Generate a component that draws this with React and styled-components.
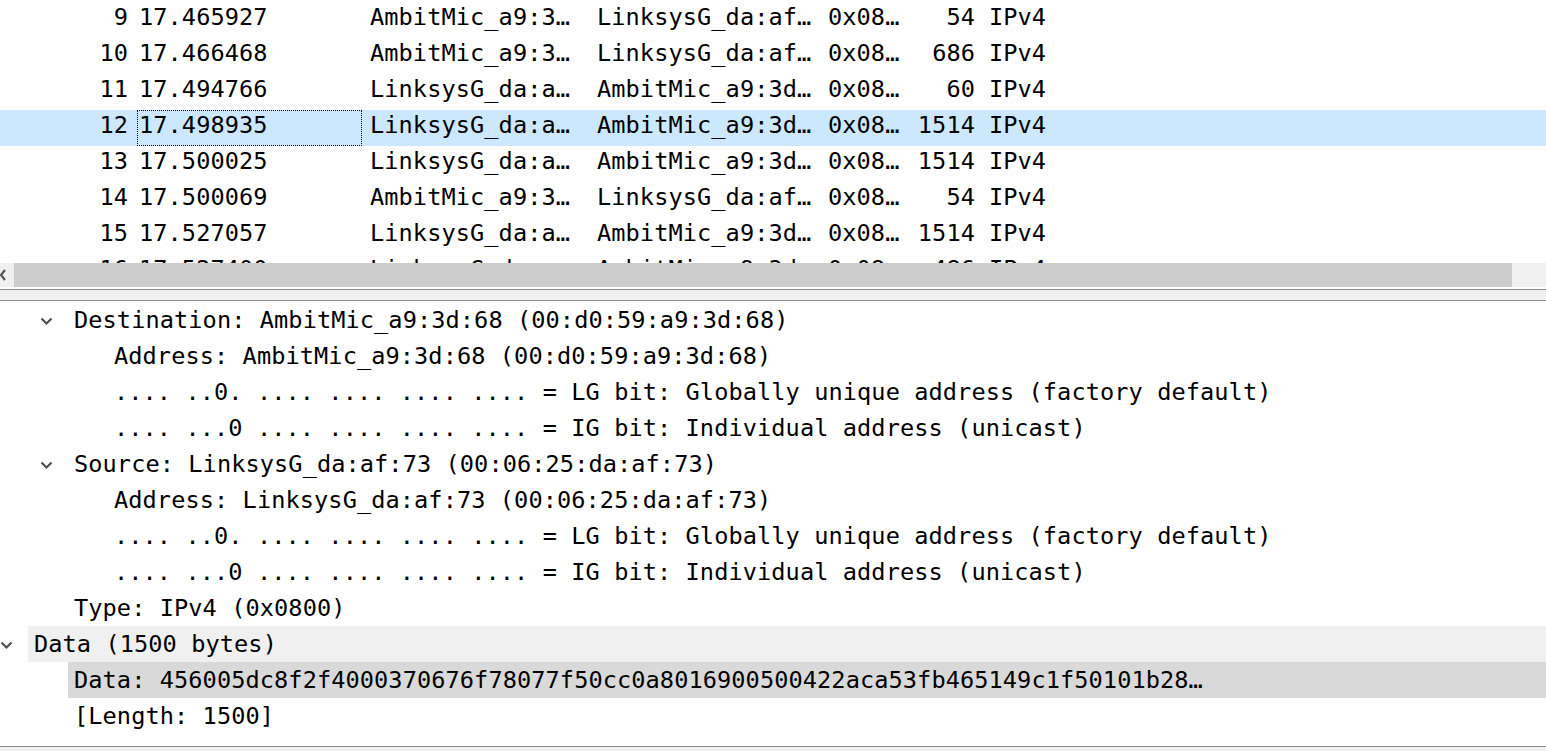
import React from "react";
import styled, { createGlobalStyle } from "styled-components";

const Global = createGlobalStyle`
  html, body { margin: 0; padding: 0; background: #ffffff; }
  body { font-family: "DejaVu Sans Mono", "Liberation Mono", monospace; color: #000; }
`;

const MONO = `"DejaVu Sans Mono", "Liberation Mono", monospace`;

const Frame = styled.div`
  width: 1546px;
  height: 751px;
  display: flex;
  flex-direction: column;
  overflow: hidden;
  background: #fff;
  font-family: ${MONO};
  font-size: 23.6px;
  letter-spacing: 0.085px;
`;

const PacketList = styled.div`
  height: 263px;
  flex: none;
  overflow: hidden;
  padding-top: 2px;
  box-sizing: border-box;
`;

const PacketRow = styled.div`
  display: grid;
  grid-template-columns: 137px 225px 232px 231px 80px 81px 1fr;
  height: 36px;
  line-height: 31px;
  background: ${(p) => (p.$selected ? "#cce8ff" : "transparent")};
  white-space: pre;
`;

const Cell = styled.div`
  overflow: hidden;
  text-align: ${(p) => (p.$right ? "right" : "left")};
  padding-left: ${(p) => p.$pl || 0}px;
  padding-right: ${(p) => p.$pr || 0}px;
  outline: ${(p) => (p.$focus ? "1px dotted #000" : "none")};
  outline-offset: -1px;
`;

const HScroll = styled.div`
  height: 24px;
  flex: none;
  display: flex;
  margin-bottom: 2px;
`;

const ArrowButton = styled.div`
  width: 14px;
  background: #f0f0f0;
  display: flex;
  align-items: stretch;
`;

const Thumb = styled.div`
  width: 1498px;
  background: #cdcdcd;
`;

const Track = styled.div`
  flex: 1;
  background: #f0f0f0;
`;

const Splitter = styled.div`
  height: 10px;
  flex: none;
  background: #f0f0f0;
  border-top: 1px solid #8a8d95;
  border-bottom: 1px solid #8a8d95;
`;

const Tree = styled.div`
  flex: 1;
  overflow: hidden;
  padding-top: 1px;
`;

const TreeRow = styled.div`
  display: flex;
  height: 36px;
  line-height: 37px;
  padding-left: ${(p) => p.$level * 40}px;
  white-space: pre;
`;

const ChevronSlot = styled.div`
  width: 28px;
  flex: none;
  display: flex;
  align-items: center;
  padding-top: 1px;
`;

const Label = styled.div`
  flex: 1;
  padding-left: 6px;
  background: ${(p) => p.$bg || "transparent"};
  overflow: hidden;
`;

const BottomBar = styled.div`
  height: 4px;
  flex: none;
  background: #f0f0f0;
  border-top: 1px solid #8a8d95;
`;

const Chevron = () => (
  <svg width="13" height="8" viewBox="0 0 13 8">
    <polyline
      points="1.5,1.5 6.5,6.5 11.5,1.5"
      fill="none"
      stroke="#505050"
      strokeWidth="2.2"
    />
  </svg>
);

const LeftArrow = () => (
  <svg width="14" height="24" viewBox="0 0 14 24">
    <polyline points="5,7 1,12 5,17" fill="none" stroke="#555555" strokeWidth="2.2" />
  </svg>
);

const packets = [
  ["9", "17.465927", "AmbitMic_a9:3…", "LinksysG_da:af…", "0x08…", "54", "IPv4"],
  ["10", "17.466468", "AmbitMic_a9:3…", "LinksysG_da:af…", "0x08…", "686", "IPv4"],
  ["11", "17.494766", "LinksysG_da:a…", "AmbitMic_a9:3d…", "0x08…", "60", "IPv4"],
  ["12", "17.498935", "LinksysG_da:a…", "AmbitMic_a9:3d…", "0x08…", "1514", "IPv4"],
  ["13", "17.500025", "LinksysG_da:a…", "AmbitMic_a9:3d…", "0x08…", "1514", "IPv4"],
  ["14", "17.500069", "AmbitMic_a9:3…", "LinksysG_da:af…", "0x08…", "54", "IPv4"],
  ["15", "17.527057", "LinksysG_da:a…", "AmbitMic_a9:3d…", "0x08…", "1514", "IPv4"],
  ["16", "17.527400", "LinksysG_da:a…", "AmbitMic_a9:3d…", "0x08…", "486", "IPv4"],
];

const SELECTED = "12";

const details = [
  { level: 1, open: true, text: "Destination: AmbitMic_a9:3d:68 (00:d0:59:a9:3d:68)" },
  { level: 2, text: "Address: AmbitMic_a9:3d:68 (00:d0:59:a9:3d:68)" },
  { level: 2, text: ".... ..0. .... .... .... .... = LG bit: Globally unique address (factory default)" },
  { level: 2, text: ".... ...0 .... .... .... .... = IG bit: Individual address (unicast)" },
  { level: 1, open: true, text: "Source: LinksysG_da:af:73 (00:06:25:da:af:73)" },
  { level: 2, text: "Address: LinksysG_da:af:73 (00:06:25:da:af:73)" },
  { level: 2, text: ".... ..0. .... .... .... .... = LG bit: Globally unique address (factory default)" },
  { level: 2, text: ".... ...0 .... .... .... .... = IG bit: Individual address (unicast)" },
  { level: 1, text: "Type: IPv4 (0x0800)" },
  { level: 0, open: true, bg: "#f0f0f0", text: "Data (1500 bytes)" },
  {
    level: 1,
    bg: "#d9d9d9",
    text: "Data: 456005dc8f2f4000370676f78077f50cc0a8016900500422aca53fb465149c1f50101b28…",
  },
  { level: 1, text: "[Length: 1500]" },
];

export default function App() {
  return (
    <>
      <Global />
      <Frame>
        <PacketList>
          {packets.map(([no, time, src, dst, proto, len, info]) => {
            const sel = no === SELECTED;
            return (
              <PacketRow key={no} $selected={sel}>
                <Cell $right $pr={9}>{no}</Cell>
                <Cell $pl={2} $focus={sel}>{time}</Cell>
                <Cell $pl={8}>{src}</Cell>
                <Cell $pl={3}>{dst}</Cell>
                <Cell $pl={3}>{proto}</Cell>
                <Cell $right $pr={11}>{len}</Cell>
                <Cell $pl={3}>{info}</Cell>
              </PacketRow>
            );
          })}
        </PacketList>
        <HScroll>
          <ArrowButton>
            <LeftArrow />
          </ArrowButton>
          <Thumb />
          <Track />
        </HScroll>
        <Splitter />
        <Tree>
          {details.map((d, i) => (
            <TreeRow key={i} $level={d.level}>
              <ChevronSlot>{d.open ? <Chevron /> : null}</ChevronSlot>
              <Label $bg={d.bg}>{d.text}</Label>
            </TreeRow>
          ))}
        </Tree>
        <BottomBar />
      </Frame>
    </>
  );
}
